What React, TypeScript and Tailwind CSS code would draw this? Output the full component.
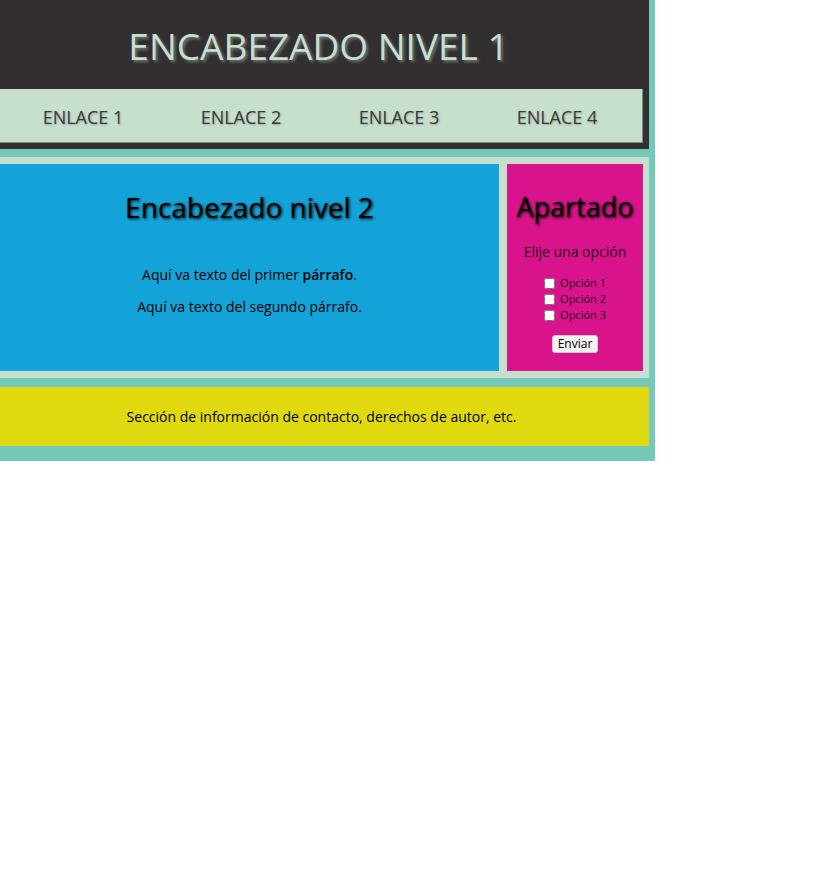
import React from 'react';

const links = ['ENLACE 1', 'ENLACE 2', 'ENLACE 3', 'ENLACE 4'];
const opciones = ['Opción 1', 'Opción 2', 'Opción 3'];

const App: React.FC = () => {
  return (
    <div className="w-[655px] overflow-hidden bg-[#75c9b8] pb-[15px] font-['Open_Sans',sans-serif]">
      <div className="-ml-[6px] w-[655px]">
        {/* cabecera */}
        <header className="h-[149px] bg-[#332e2f] pr-[6px] flex flex-col">
          <div className="h-[89px] pt-[2px] flex items-center justify-center">
            <h1 className="text-[37px] leading-none font-normal text-[#c8dfcf] [text-shadow:2px_2px_3px_#6f7b75]">
              ENCABEZADO NIVEL 1
            </h1>
          </div>
          <nav className="ml-[6px] h-[54px] bg-[#c7dfcd] border-r border-b border-[#7d8a83] grid grid-cols-4 items-center pl-[4px] pr-[6px] pt-[3px]">
            {links.map((l) => (
              <a key={l} href="#" className="text-center text-[18px] text-[#3b3838] [text-shadow:1px_1px_2px_#9aa89f]">
                {l}
              </a>
            ))}
          </nav>
        </header>

        {/* contenido */}
        <main className="mt-[8px] bg-[#c7dfcd] pt-[7px] pb-[7px] pl-[6px] pr-[6px] flex gap-[8px]">
          <article className="w-[499px] h-[207px] bg-[#13a3d8] flex flex-col items-center text-center text-black">
            <h2 className="mt-[29px] text-[28px] leading-[28px] font-medium [text-shadow:1px_1px_3px_#000]">
              Encabezado nivel 2
            </h2>
            <p className="mt-[44px] text-[14px] leading-[20px]">
              Aquí va texto del primer <strong className="font-semibold">párrafo</strong>.
            </p>
            <p className="mt-[12px] text-[14px] leading-[20px]">Aquí va texto del segundo párrafo.</p>
          </article>

          <aside className="w-[136px] h-[207px] bg-[#d9138b] flex flex-col items-center text-center text-black">
            <h3 className="mt-[28px] text-[27px] leading-[30px] font-medium [text-shadow:1px_1px_3px_#000]">
              Apartado
            </h3>
            <p className="mt-[21px] text-[14px] leading-[18px] text-[#2a0a1c]">Elije una opción</p>
            <form className="mt-[14px] flex flex-col items-center" onSubmit={(e) => e.preventDefault()}>
              {opciones.map((o) => (
                <label key={o} className="h-[16px] flex items-center gap-[5px] text-[11px] text-[#2a0a1c]">
                  <input type="checkbox" className="w-[11px] h-[11px] m-0" />
                  {o}
                </label>
              ))}
              <button
                type="submit"
                className="mt-[12px] h-[18px] px-[5px] rounded-[3px] bg-[#f2f2f2] border border-[#c9c9c9] text-[12px] leading-none text-black"
              >
                Enviar
              </button>
            </form>
          </aside>
        </main>

        {/* pie */}
        <footer className="mt-[9px] h-[59px] bg-[#e1d90f] flex items-center justify-center text-[14px] text-black">
          Sección de información de contacto, derechos de autor, etc.
        </footer>
      </div>
    </div>
  );
};

export default App;
